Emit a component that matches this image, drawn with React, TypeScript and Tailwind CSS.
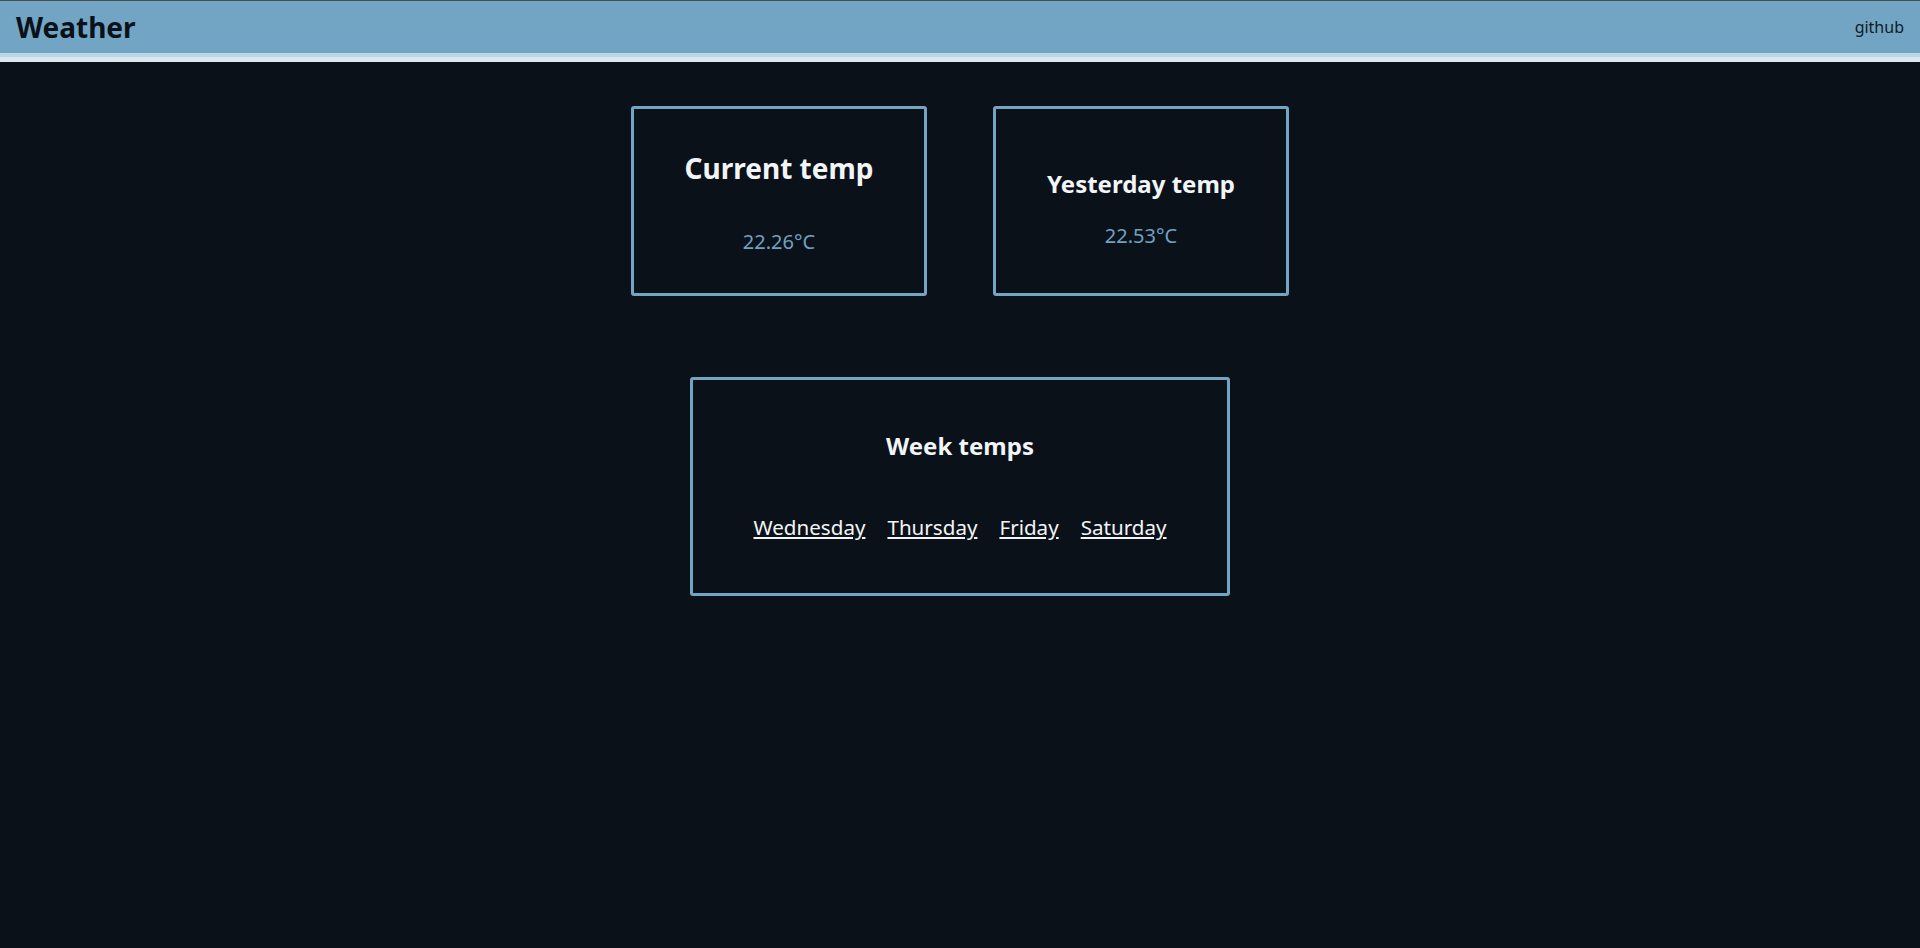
export default function App() {
    const days = ["Wednesday", "Thursday", "Friday", "Saturday"];

    return (
        <div className="min-h-screen bg-[#0b1119] font-['Noto_Sans',sans-serif]">
            {/* Header */}
            <div className="border-t border-[#4b4d50]">
                <div className="h-[52px] bg-[#72a5c3] flex items-center justify-between px-4">
                    <h1 className="text-[28px] leading-[38px] font-bold text-[#0b1119]">Weather</h1>
                    <a className="text-[16px] text-[#0f1c26]">github</a>
                </div>
                <div className="h-[4px] bg-[#bdd6e5]"></div>
                <div className="h-[5px] bg-[#dbe8f0]"></div>
            </div>

            {/* Today / yesterday */}
            <div className="flex justify-center gap-[66px] mt-[44px]">
                <div className="w-[296px] h-[190px] border-[3px] border-[#72a5c3] rounded-[3px] flex flex-col items-center pt-[40px]">
                    <h2 className="text-[28px] leading-[38px] font-bold text-[#f1f5f8]">Current temp</h2>
                    <p className="mt-[41px] text-[20px] leading-[27px] text-[#6fa2c0]">22.26°C</p>
                </div>
                <div className="w-[296px] h-[190px] border-[3px] border-[#72a5c3] rounded-[3px] flex flex-col items-center pt-[58px]">
                    <h2 className="text-[24px] leading-[33px] font-bold text-[#f1f5f8]">Yesterday temp</h2>
                    <p className="mt-[22px] text-[20px] leading-[27px] text-[#6fa2c0]">22.53°C</p>
                </div>
            </div>

            {/* Week */}
            <div className="flex justify-center mt-[81px]">
                <div className="w-[540px] h-[219px] border-[3px] border-[#72a5c3] rounded-[3px] flex flex-col items-center pt-[49px]">
                    <h2 className="text-[24px] leading-[33px] font-bold text-[#f1f5f8]">Week temps</h2>
                    <div className="mt-[52px] flex gap-[22px]">
                        {days.map((d) => (
                            <a key={d} className="text-[20.6px] leading-[27px] text-[#f1f5f8] underline">{d}</a>
                        ))}
                    </div>
                </div>
            </div>
        </div>
    );
}
